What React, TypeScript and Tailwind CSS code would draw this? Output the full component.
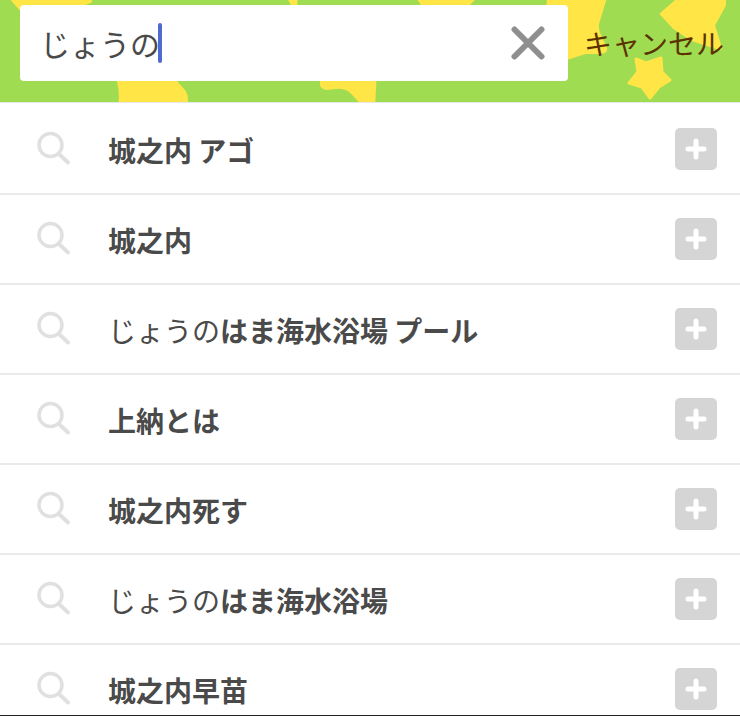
const rows: { light?: string; bold: string }[] = [
  { bold: "城之内 アゴ" },
  { bold: "城之内" },
  { light: "じょうの", bold: "はま海水浴場 プール" },
  { bold: "上納とは" },
  { bold: "城之内死す" },
  { light: "じょうの", bold: "はま海水浴場" },
  { bold: "城之内早苗" },
];

const font = { fontFamily: '"Noto Sans CJK JP", sans-serif' };

function SearchIcon() {
  return (
    <svg width="36" height="36" viewBox="0 0 36 36" fill="none" stroke="#e0e0e0" strokeWidth="3.5" strokeLinecap="round">
      <circle cx="14.5" cy="14" r="11.5" />
      <path d="M23 23 L32 31.5" strokeWidth="4" />
    </svg>
  );
}

function Row({ light, bold }: { light?: string; bold: string }) {
  return (
    <div className="flex items-center h-[90px] shrink-0 border-b-2 border-[#ebebeb] bg-white pl-[36px] pr-[23px]">
      <SearchIcon />
      <div className="ml-[36px] pt-[1px] flex-1 text-[28px] leading-[36px] text-[#4a4a4a] whitespace-nowrap">
        {light && <span className="font-normal">{light}</span>}
        <span className="font-bold">{bold}</span>
      </div>
      <div className="flex items-center justify-center w-[42px] h-[42px] rounded-[5px] bg-[#d5d5d5]">
        <svg width="22" height="22" viewBox="0 0 22 22" stroke="#fff" strokeWidth="5" strokeLinecap="round">
          <path d="M11 3 V19 M3 11 H19" />
        </svg>
      </div>
    </div>
  );
}

export default function App() {
  return (
    <div className="w-[740px] h-[716px] overflow-hidden bg-white flex flex-col relative" style={font}>
      <div className="relative h-[103px] shrink-0 bg-[#9fdc52] border-b border-[#e6e6e6] flex items-start pl-[20px] pt-[5px]">
        <svg className="absolute inset-0" width="740" height="102" viewBox="0 0 740 102" fill="#ffe545" stroke="#ffe545" strokeWidth="4" strokeLinejoin="round">
          <path d="M8 -6 L91 -6 L90 1 L60 12 L22 10 Z" />
          <path d="M119 70 L165 70 L184 92 Q188 98 184 108 L120 108 Q122 92 119 82 Z" />
          <path d="M287 -6 L296 -6 L295 8 Z" />
          <path d="M322 70 L375 70 L373 108 L367 108 L352 92 Q346 86 336 87 L326 88 Q321 87 322 82 Z" />
          <path d="M416 -6 L478 -6 L466 6 L424 6 Z" />
          <path d="M549 -6 L606 -6 L597 24 Q596 30 600 38 L605 48 Q606 52 600 52 L585 52 L560 60 L548 20 Z" />
          <path d="M662 14 L685 -6 L724 -6 L724 5 L713 25 L720 48 L692 39 L674 27 Z" />
          <path d="M636 59 L646 63 L661 58 L662 72 L670 80 L659 87 L650 98 L642 87 L629 83 L638 72 Z" strokeWidth="3" />
        </svg>
        <div className="relative flex items-center w-[548px] h-[76px] rounded-[4px] bg-white pl-[20px] pr-[23px]">
          <span className="text-[30px] leading-none text-[#4a4a4a] font-normal">じょうの</span>
          <span className="w-[4px] h-[40px] -ml-[2px] rounded-full bg-[#4f6bd1]" />
          <svg className="ml-auto" width="34" height="34" viewBox="0 0 34 34" stroke="#8f8f8f" strokeWidth="6" strokeLinecap="round">
            <path d="M3.5 3.5 L30.5 30.5 M30.5 3.5 L3.5 30.5" />
          </svg>
        </div>
        <span className="relative ml-[16px] mt-[22px] text-[28px] leading-[32px] text-[#5c3300] whitespace-nowrap font-normal">キャンセル</span>
      </div>
      <div className="flex flex-col pt-[2px]">
        {rows.map((r, i) => (
          <Row key={i} {...r} />
        ))}
      </div>
      <div className="absolute left-0 right-0 bottom-0 h-[1px] bg-[#222]" />
    </div>
  );
}
